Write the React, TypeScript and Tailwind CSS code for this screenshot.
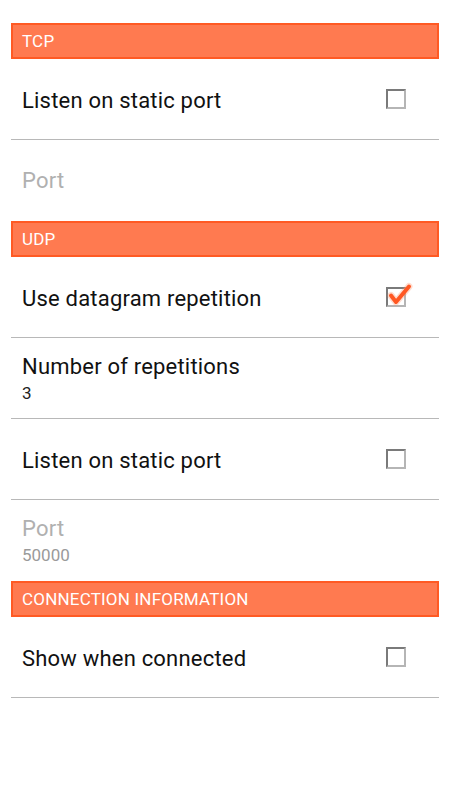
import React from 'react';

const font = { fontFamily: 'Roboto, "Noto Sans", sans-serif' };

const Header: React.FC<{ title: string }> = ({ title }) => (
  <div className="h-[36px] bg-[#ff7a50] border-2 border-[#ff5a24] flex items-center px-[9px]">
    <span className="text-white text-[17px] tracking-[0.2px] leading-none">{title}</span>
  </div>
);

const Checkbox: React.FC<{ checked?: boolean }> = ({ checked }) => (
  <div className="relative w-[20px] h-[20px] border-2 border-t-[#7a7a7a] border-l-[#7a7a7a] border-r-[#b5b5b5] border-b-[#b5b5b5] bg-white">
    {checked && (
      <svg
        className="absolute -top-[8px] -left-[2px]"
        width="28"
        height="28"
        viewBox="0 0 28 28"
      >
        <path
          d="M5 14.5 L10 21 L23 5.5"
          fill="none"
          stroke="#ff8a60"
          strokeOpacity="0.3"
          strokeWidth="7"
          strokeLinecap="round"
          strokeLinejoin="round"
        />
        <path
          d="M5 14.5 L10 21 L23 5.5"
          fill="none"
          stroke="#ff5722"
          strokeWidth="4"
          strokeLinecap="round"
          strokeLinejoin="round"
        />
      </svg>
    )}
  </div>
);

const CheckRow: React.FC<{ label: string; checked?: boolean }> = ({ label, checked }) => (
  <div className="h-[81px] border-b border-[#b8b8b8] flex items-center justify-between pl-[11px] pr-[33px]">
    <span className="text-[22px] tracking-[0.2px] text-[#111] mt-[2px]">{label}</span>
    <Checkbox checked={checked} />
  </div>
);

const TextRow: React.FC<{ label: string; value?: string; disabled?: boolean; divider?: boolean }> = ({
  label,
  value,
  disabled,
  divider,
}) => (
  <div
    className={
      'h-[81px] flex flex-col justify-center pl-[11px] ' + (divider ? 'border-b border-[#b8b8b8]' : '')
    }
  >
    <span
      className={
        'text-[22px] tracking-[0.2px] leading-[28px] ' + (disabled ? 'text-[#b0b0b0]' : 'text-[#111]')
      }
    >
      {label}
    </span>
    {value && (
      <span className={'text-[17px] leading-[22px] mt-[1px] ' + (disabled ? 'text-[#9a9a9a]' : 'text-[#222]')}>
        {value}
      </span>
    )}
  </div>
);

export default function App() {
  return (
    <div className="w-[450px] h-[800px] bg-white" style={font}>
      <div className="pt-[23px] px-[11px]">
        <Header title="TCP" />
        <CheckRow label="Listen on static port" />
        <TextRow label="Port" disabled />
        <Header title="UDP" />
        <CheckRow label="Use datagram repetition" checked />
        <TextRow label="Number of repetitions" value="3" divider />
        <CheckRow label="Listen on static port" />
        <TextRow label="Port" value="50000" disabled />
        <Header title="CONNECTION INFORMATION" />
        <CheckRow label="Show when connected" />
      </div>
    </div>
  );
}
